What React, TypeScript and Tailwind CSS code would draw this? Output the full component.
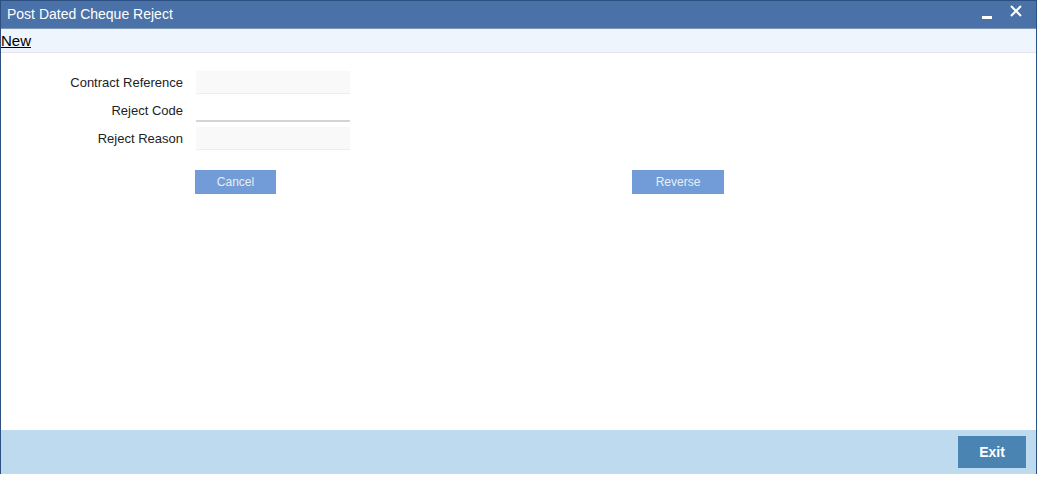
export default function App() {
  const font = { fontFamily: '"Liberation Sans", Arial, sans-serif' };
  return (
    <div className="w-[1038px] h-[483px] bg-white" style={font}>
      <div className="w-[1037px] h-[474px] flex flex-col border border-[#2c4f82] border-b-0">
        {/* Title bar */}
        <div className="h-[27px] bg-[#4a71a8] flex items-center justify-between pl-[6px] pr-[14px]">
          <span className="text-[14px] text-white">Post Dated Cheque Reject</span>
          <div className="flex items-center gap-[18px]">
            <div className="w-[10px] h-[3px] bg-white mt-[5px]" />
            <svg width="12" height="12" viewBox="0 0 12 12" className="-mt-[8px]">
              <path d="M1 1 L11 11 M11 1 L1 11" stroke="white" strokeWidth="2" />
            </svg>
          </div>
        </div>
        {/* Toolbar */}
        <div className="h-[25px] bg-[#eef5fd] border-t border-[#7f98b8] border-b border-b-[#e2e6ea] flex items-center">
          <span className="text-[15px] text-black underline leading-none">New</span>
        </div>
        {/* Body */}
        <div className="flex-1 flex flex-col pt-[18px]">
          <div className="flex flex-col gap-[5px]">
            <div className="flex items-center">
              <span className="w-[182px] text-right text-[13px] text-[#222]">Contract Reference</span>
              <div className="ml-[13px] w-[154px] h-[23px] bg-[#f9f9f9] border-b border-[#eeeeee]" />
            </div>
            <div className="flex items-center">
              <span className="w-[182px] text-right text-[13px] text-[#222]">Reject Code</span>
              <div className="ml-[13px] w-[154px] h-[23px] bg-white border-b-2 border-[#d4d4d4]" />
            </div>
            <div className="flex items-center">
              <span className="w-[182px] text-right text-[13px] text-[#222]">Reject Reason</span>
              <div className="ml-[13px] w-[154px] h-[23px] bg-[#f9f9f9] border-b border-[#eeeeee]" />
            </div>
          </div>
          <div className="flex mt-[20px]">
            <button className="ml-[194px] w-[81px] h-[24px] bg-[#719cd7] text-[12px] text-[#e8eef6]">Cancel</button>
            <button className="ml-[356px] w-[92px] h-[24px] bg-[#719cd7] text-[12px] text-[#e8eef6]">Reverse</button>
          </div>
        </div>
        {/* Footer */}
        <div className="h-[44px] bg-[#bedaee] flex items-center justify-end pr-[10px]">
          <button className="w-[68px] h-[32px] bg-[#4a84b2] text-[14px] font-bold text-white">Exit</button>
        </div>
      </div>
    </div>
  );
}
